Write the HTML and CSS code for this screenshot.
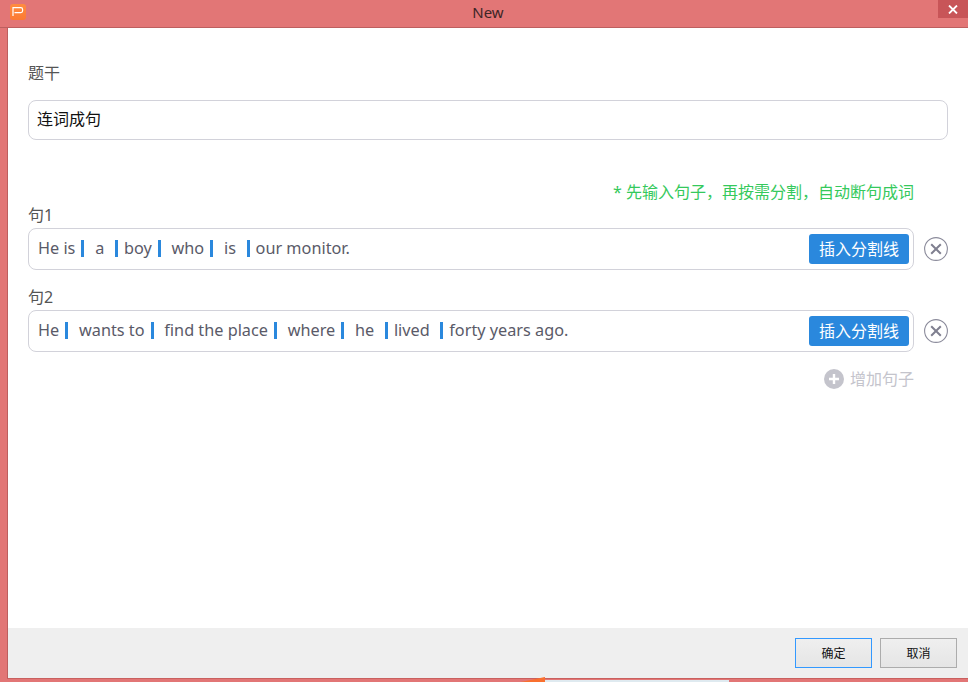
FILE: index.html
```html
<!DOCTYPE html>
<html lang="zh">
<head>
<meta charset="utf-8">
<title>New</title>
<link rel="stylesheet" href="styles.css">
</head>
<body>
<div class="window">
  <header class="titlebar">
    <span class="app-icon"><svg width="16" height="16" viewBox="0 0 16 16"><path d="M3 12V3.6H10.8Q12.6 3.6 12.6 5.4V6.8Q12.6 8.6 10.8 8.6H4.5" fill="none" stroke="#fff" stroke-width="1.2"/></svg></span>
    <span class="title">New</span>
    <button class="close" aria-label="close"><svg width="10" height="9" viewBox="0 0 10 9"><path d="M1 .5L9 8.5M9 .5L1 8.5" stroke="#fff" stroke-width="1.8"/></svg></button>
  </header>
  <div class="body">
    <main class="content">
      <div class="stem-label">题干</div>
      <div class="stem-input">连词成句</div>
      <div class="hint">* 先输入句子，再按需分割，自动断句成词</div>
      <div class="label first">句1</div>
      <div class="row">
        <div class="sentence">
          <div class="text">He is<i class="bar"></i><span class="pl pr">a</span><i class="bar"></i>boy<i class="bar"></i><span class="pl">who</span><i class="bar"></i><span class="pl pr">is</span><i class="bar"></i>our monitor.</div>
          <button class="insert">插入分割线</button>
        </div>
        <button class="remove" aria-label="remove"><svg width="24" height="24" viewBox="0 0 24 24"><circle cx="12" cy="12" r="11.4" fill="none" stroke="#8b8b9b" stroke-width="1.1"/><path d="M7.2 7.2L16.8 16.8M16.8 7.2L7.2 16.8" stroke="#7f7f8f" stroke-width="2"/></svg></button>
      </div>
      <div class="label">句2</div>
      <div class="row">
        <div class="sentence">
          <div class="text">He<i class="bar"></i><span class="pl">wants to</span><i class="bar"></i><span class="pl">find the place</span><i class="bar"></i><span class="pl">where</span><i class="bar"></i><span class="pl pr">he</span><i class="bar"></i><span class="pr">lived</span><i class="bar"></i>forty years ago.</div>
          <button class="insert">插入分割线</button>
        </div>
        <button class="remove" aria-label="remove"><svg width="24" height="24" viewBox="0 0 24 24"><circle cx="12" cy="12" r="11.4" fill="none" stroke="#8b8b9b" stroke-width="1.1"/><path d="M7.2 7.2L16.8 16.8M16.8 7.2L7.2 16.8" stroke="#7f7f8f" stroke-width="2"/></svg></button>
      </div>
      <div class="add">
        <svg width="20" height="20" viewBox="0 0 20 20"><circle cx="10" cy="10" r="10" fill="#c4c4cc"/><path d="M10 5V15M5 10H15" stroke="#fff" stroke-width="2.4"/></svg>
        <span>增加句子</span>
      </div>
    </main>
    <footer class="footer">
      <button class="btn primary">确定</button>
      <button class="btn">取消</button>
    </footer>
  </div>
  <div class="bottom"><span class="task-orange"></span><span class="task-white"></span></div>
</div>
</body>
</html>
```
FILE: styles.css
```css
* { box-sizing: border-box; }
html, body { margin: 0; height: 100%; overflow: hidden; }
body { font-family: "Noto Sans", "Noto Sans CJK SC", sans-serif; color: #555; }
button { font-family: inherit; margin: 0; padding: 0; cursor: pointer; }
.window { width: 968px; height: 682px; background: #e27676; display: flex; flex-direction: column; }
.titlebar { height: 28px; flex: none; border-bottom: 1px solid #bd5f5f; position: relative; display: flex; justify-content: center; padding-left: 8px; }
.app-icon { position: absolute; left: 10px; top: 4px; width: 16px; height: 16px; border-radius: 3px; background: linear-gradient(#ff8c3f, #fb7a33); display: flex; }
.title { font-size: 15px; line-height: 25px; color: #3d2526; }
.close { position: absolute; right: 0; top: 0; width: 30px; height: 18px; border: 0; background: #c85558; display: flex; align-items: center; justify-content: center; }
.body { flex: none; height: 651px; margin-left: 7px; border-left: 1px solid #bd5f5f; border-bottom: 1px solid #c9605f; display: flex; flex-direction: column; background: #fff; }
.content { flex: 1; padding: 35px 20px 0 20px; }
.stem-label { font-size: 16px; line-height: 20px; color: #555; }
.stem-input { margin-top: 17px; height: 40px; border: 1px solid #d2d2da; border-radius: 8px; padding: 0 8px; font-size: 16px; line-height: 37px; color: #111; }
.hint { margin-top: 42px; width: 886px; text-align: right; font-size: 16px; line-height: 20px; color: #35c95c; }
.label { margin-top: 17px; font-size: 16px; line-height: 20px; color: #555; }
.label.first { margin-top: 3px; }
.row { margin-top: 3px; display: flex; align-items: center; gap: 10px; }
.sentence { width: 886px; height: 42px; border: 1px solid #d2d2da; border-radius: 8px; display: flex; align-items: center; justify-content: space-between; padding: 0 4px 0 9px; }
.text { font-size: 16.25px; line-height: 36px; color: #5a5a68; white-space: nowrap; margin-top: -2px; }
.bar { display: inline-block; width: 3px; height: 17px; background: #2a88dd; vertical-align: -3px; margin: 0 6px; }
.pl { padding-left: 4.8px; }
.pr { padding-right: 4.6px; }
.insert { width: 100px; height: 30px; flex: none; border: 0; border-radius: 3px; background: #2a88dd; color: #fff; font-size: 16px; padding-bottom: 2px; }
.remove { width: 24px; height: 24px; border: 0; background: none; display: flex; flex: none; }
.add { width: 886px; margin-top: 17px; display: flex; justify-content: flex-end; align-items: center; gap: 6px; font-size: 16px; line-height: 20px; color: #c4c4cc; }
.footer { flex: none; height: 50px; background: #efefef; display: flex; justify-content: flex-end; align-items: center; gap: 8px; padding: 0 11px 0 0; }
.btn { width: 77px; height: 30px; border: 1px solid #acacac; background: linear-gradient(#efefef, #e5e5e5); color: #111; font-size: 12px; }
.btn.primary { border-color: #3399ff; }
.bottom { flex: 1; position: relative; }
.task-orange { position: absolute; left: 521px; top: -2px; width: 24px; height: 5px; background: #f9702f; clip-path: polygon(0 100%, 100% 0, 100% 100%); }
.task-white { position: absolute; left: 545px; top: 1px; width: 184px; height: 2px; background: #dfeaf0; }
```
